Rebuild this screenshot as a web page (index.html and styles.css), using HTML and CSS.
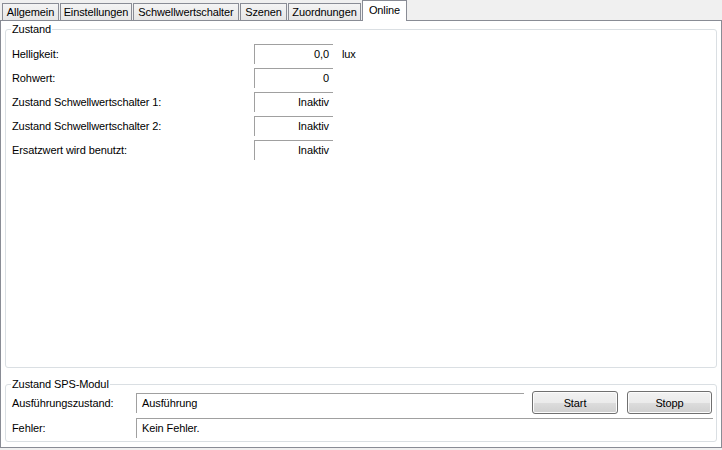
FILE: index.html
```html
<!DOCTYPE html>
<html lang="de">
<head>
  <meta charset="UTF-8" />
  <title>Online</title>
  <link rel="stylesheet" href="styles.css">
</head>
<body>
  <div class="tabs">
    <div class="tab tab-allgemein">Allgemein</div>
    <div class="tab tab-einstellungen">Einstellungen</div>
    <div class="tab tab-schwelle">Schwellwertschalter</div>
    <div class="tab tab-szenen">Szenen</div>
    <div class="tab tab-zuordnungen">Zuordnungen</div>
    <div class="tab tab-online active">Online</div>
  </div>

  <div class="page">
    <!-- Zustand -->
    <fieldset class="group group-main">
      <legend>Zustand</legend>
      <div class="row">
        <span class="label">Helligkeit:</span>
        <span class="field">0,0</span>
        <span class="unit">lux</span>
      </div>
      <div class="row">
        <span class="label">Rohwert:</span>
        <span class="field">0</span>
      </div>
      <div class="row">
        <span class="label">Zustand Schwellwertschalter 1:</span>
        <span class="field">Inaktiv</span>
      </div>
      <div class="row">
        <span class="label">Zustand Schwellwertschalter 2:</span>
        <span class="field">Inaktiv</span>
      </div>
      <div class="row">
        <span class="label">Ersatzwert wird benutzt:</span>
        <span class="field">Inaktiv</span>
      </div>
    </fieldset>

    <!-- Zustand SPS-Modul -->
    <fieldset class="group group-plc">
      <legend>Zustand SPS-Modul</legend>
      <div class="plc-row">
        <span class="plc-label">Ausführungszustand:</span>
        <span class="plc-field">Ausführung</span>
        <button type="button" class="btn btn-start">Start</button>
        <button type="button" class="btn btn-stop">Stopp</button>
      </div>
      <div class="plc-row plc-row-error">
        <span class="plc-label">Fehler:</span>
        <span class="plc-field">Kein Fehler.</span>
      </div>
    </fieldset>
  </div>
</body>
</html>
```

FILE: styles.css
```css
* {
  box-sizing: border-box;
}

body {
  margin: 0;
  width: 722px;
  height: 450px;
  background-color: #f0f0f0;
  font-family: "Liberation Sans", Arial, sans-serif;
  font-size: 11px;
  letter-spacing: -0.1px;
  color: #000;
  overflow: hidden;
}

/* Tab strip */
.tabs {
  display: flex;
  align-items: flex-end;
  height: 20px;
  padding-left: 2px;
}

.tab {
  height: 17px;
  line-height: 16px;
  margin-right: 1px;
  text-align: center;
  border: 1px solid #898c95;
  border-bottom: none;
  background: linear-gradient(#f4f4f4, #e6e6e6);
}

.tab-allgemein { width: 57px; }
.tab-einstellungen { width: 72px; }
.tab-schwelle { width: 106px; }
.tab-szenen { width: 47px; }
.tab-zuordnungen { width: 73px; }
.tab-online { width: 45px; }

.tab.active {
  position: relative;
  z-index: 1;
  height: 21px;
  line-height: 18px;
  margin-bottom: -1px;
  background: #fff;
}

/* Page */
.page {
  display: flex;
  flex-direction: column;
  width: 722px;
  height: 428px;
  padding: 2px 4px 5px 4px;
  background-color: #fff;
  border: 1px solid #898c95;
}

.group {
  margin: 0;
  min-width: 0;
  border: 1px solid #dadfe3;
  border-radius: 3px;
}

.group legend {
  padding: 0 1px;
  margin-left: -1px;
  line-height: 13px;
}

.group-main {
  flex: 1;
  display: flex;
  flex-direction: column;
  gap: 4px;
  padding: 8px 6px 0 6px;
}

.row {
  display: flex;
  align-items: center;
  height: 20px;
}

.label {
  width: 242px;
}

.field {
  width: 79px;
  height: 20px;
  line-height: 19px;
  padding-right: 4px;
  text-align: right;
  border-top: 1px solid #a0a0a0;
  border-left: 1px solid #a0a0a0;
}

.unit {
  margin-left: 9px;
}

.group-plc {
  margin-top: 10px;
  padding: 0 3px 3px 6px;
}

.plc-row {
  display: flex;
  align-items: center;
  height: 23px;
}

.plc-row-error {
  margin-top: 4px;
  height: 20px;
}

.plc-label {
  width: 124px;
}

.plc-field {
  flex: 1;
  height: 20px;
  line-height: 19px;
  padding-left: 5px;
  border-top: 1px solid #a0a0a0;
  border-left: 1px solid #a0a0a0;
}

.btn {
  width: 86px;
  height: 23px;
  padding: 0;
  font-family: inherit;
  font-size: 11px;
  letter-spacing: -0.1px;
  color: #000;
  border: 1px solid #707070;
  border-radius: 3px;
  background: linear-gradient(#f2f2f2 0%, #ebebeb 50%, #dddddd 51%, #cfcfcf 100%);
  box-shadow: inset 0 0 0 1px #fcfcfc;
}

.btn-start {
  margin-left: 8px;
}

.btn-stop {
  width: 85px;
  margin-left: 9px;
  margin-right: 1px;
}
```
